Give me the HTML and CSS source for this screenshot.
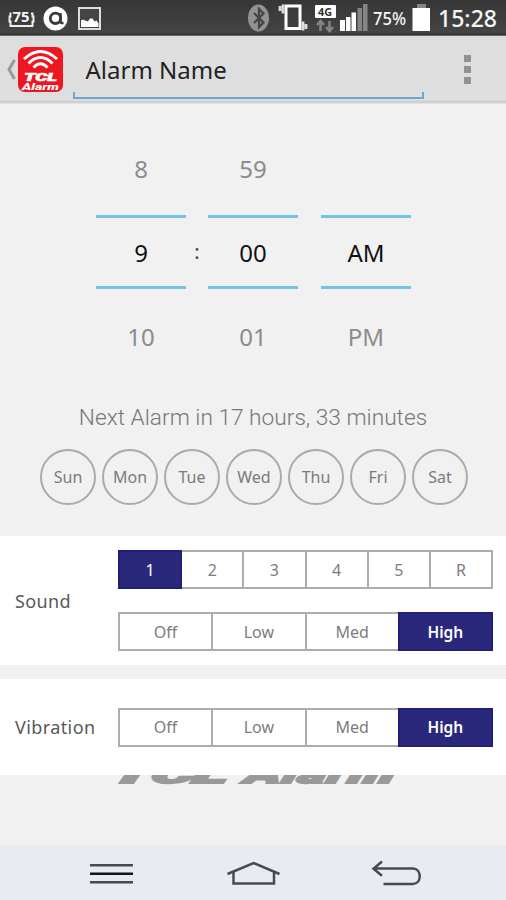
FILE: index.html
```html
<!DOCTYPE html>
<html lang="en">
<head>
<meta charset="utf-8">
<title>Alarm</title>
<link rel="stylesheet" href="styles.css">
</head>
<body>
<div class="phone">
  <header class="status">
    <svg class="status-icons" width="506" height="36" viewBox="0 0 506 36">
      <path d="M12 13.500h-1.500v3h-1v5h1v4.500h22v-4.500h1v-5h-1v-3h-1.500" stroke="#eee" stroke-width="2" fill="none"/>
      <text x="12.500" y="22" font-size="15" font-weight="700" textLength="17" lengthAdjust="spacingAndGlyphs" class="glyph outlined">75</text>
      <circle cx="55.500" cy="18.500" r="12" fill="#fff"/>
      <circle cx="55.500" cy="18.300" r="5.200" fill="none" stroke="#393939" stroke-width="2.800"/>
      <path d="M60.500 13v8.500q0 2 3 1.500" stroke="#393939" stroke-width="2.500" fill="none"/>
      <rect x="79" y="8" width="21" height="21" fill="#444" stroke="#ddd" stroke-width="2"/>
      <path d="M81 27v-6.500l2-1 2 1 3 1 2-3 2.500 0 2 3 2-1 2 3v3.500z" fill="#fff"/>
      <ellipse cx="258.500" cy="18" rx="10.500" ry="13.500" fill="#929292"/>
      <path d="M254 13l9.500 9.500-4.500 4.500v-18l4.500 4.500-9.500 9.500" stroke="#444" stroke-width="2.200" fill="none"/>
      <rect x="286" y="6" width="14" height="22.500" fill="none" stroke="#fff" stroke-width="3"/>
      <path d="M280 6v5M283 4.500v9M303 21.500v9M306 24v5" stroke="#ddd" stroke-width="2.800"/>
      <rect x="315" y="5" width="21" height="13" rx="1" fill="#fff"/>
      <text x="318" y="15.500" font-size="11" font-weight="700" textLength="14" lengthAdjust="spacingAndGlyphs" class="glyph dark">4G</text>
      <path d="M320.500 31v-9M317 25l3.500-4 3.500 4M329.500 21v9M326 27l3.500 4 3.500-4" stroke="#858585" stroke-width="2.500" fill="none"/>
      <path d="M340 20h5v11h-5zM346 17h4.500v14h-4.500zM351.500 12.500h4.500v18.500h-4.500z" fill="#fff"/>
      <path d="M357.500 8h4.500v23h-4.500zM363 4h4.500v27h-4.500z" fill="#858585"/>
      <text x="373" y="25" font-size="18.500" font-weight="500" textLength="33" lengthAdjust="spacingAndGlyphs" class="glyph">75%</text>
      <path d="M417 4h9v4h-9z" fill="#858585"/>
      <rect x="412.500" y="8" width="17.500" height="23" fill="#fff"/>
      <text x="438" y="27" font-size="24" font-weight="500" textLength="59" lengthAdjust="spacingAndGlyphs" class="glyph">15:28</text>
    </svg>
  </header>
  <div class="actionbar">
    <svg class="app-icon" width="73" height="66" viewBox="0 36 73 66">
      <path d="M14.500 60l-5.500 9.500 5.500 9.500" fill="none" stroke="#999" stroke-width="3"/>
      <rect x="18" y="47" width="45" height="45" rx="7" fill="#ee1620"/>
      <g fill="none" stroke="#fff" stroke-width="3">
        <path d="M24 59Q40.500 44 57 59"/>
        <path d="M28.500 63.500Q40.500 51.500 52.500 63.500"/>
        <path d="M33.500 67.500Q40.500 60 47.500 67.500"/>
      </g>
      <text x="24" y="80.500" font-size="11" textLength="33" lengthAdjust="spacingAndGlyphs" class="logo bold">TCL</text>
      <text x="22" y="89.500" font-size="8.500" textLength="37" lengthAdjust="spacingAndGlyphs" class="logo">Alarm</text>
    </svg>
    <div class="name-field"><span>Alarm Name</span></div>
    <div class="overflow"><i></i><i></i><i></i></div>
  </div>
  <main class="content">
    <div class="picker">
      <div class="wheel"><span>8</span><b>9</b><span>10</span></div>
      <div class="colon">:</div>
      <div class="wheel"><span>59</span><b>00</b><span>01</span></div>
      <div class="wheel last"><span></span><b>AM</b><span>PM</span></div>
    </div>
    <p class="next">Next Alarm in 17 hours, 33 minutes</p>
    <div class="days"><span>Sun</span><span>Mon</span><span>Tue</span><span>Wed</span><span>Thu</span><span>Fri</span><span>Sat</span></div>
    <section class="panel sound">
      <h2>Sound</h2>
      <div class="rows">
        <div class="segments"><span class="on">1</span><span>2</span><span>3</span><span>4</span><span>5</span><span>R</span></div>
        <div class="segments"><span>Off</span><span>Low</span><span>Med</span><span class="on">High</span></div>
      </div>
    </section>
    <section class="panel vibration">
      <h2>Vibration</h2>
      <div class="rows">
        <div class="segments"><span>Off</span><span>Low</span><span>Med</span><span class="on">High</span></div>
      </div>
    </section>
    <svg class="watermark" width="506" height="12" viewBox="0 775 506 12">
      <g transform="translate(0 782.500) skewX(-15)" font-size="26">
        <text transform="scale(2.6 1)" x="42 57.500 73.500" y="0" class="logo grey">TCL</text>
        <text transform="scale(2.1 1)" x="116" y="0" textLength="71" class="logo grey">Alarm</text>
      </g>
    </svg>
  </main>
  <nav class="navbar">
    <svg width="506" height="55" viewBox="0 845 506 55" fill="none" stroke="#454b55" stroke-width="2.500">
      <path d="M90 865.300h43M90 882.300h43"/>
      <path d="M90 873.700h43" stroke="#15151c"/>
      <path d="M227.500 874l26-11 26 11M233.500 872v11.500h40.500v-11.500"/>
      <path d="M382 861.500l-8.500 7.200 8.500 7M374 868.500h39c9 0 9 15.500 0 15.500h-29.500"/>
    </svg>
  </nav>
</div>
</body>
</html>
```
FILE: styles.css
```css
* { box-sizing: border-box; }
body { margin: 0; font-family: "Noto Sans", "Open Sans", sans-serif; }
svg { display: block; }
.phone { width: 506px; height: 900px; display: flex; flex-direction: column; background: #f1f1f1; overflow: hidden; }
.status { height: 36px; background: linear-gradient(#363636, #444 33px, #292929 35px, #aaa 36px); }
.glyph { fill: #f5f5f5; font-family: "Noto Sans", sans-serif; }
.outlined { stroke: #3a3a3a; stroke-width: 3px; paint-order: stroke; }
.dark { fill: #333; }
.logo { fill: #fff; font-family: Roboto, sans-serif; font-weight: 900; font-style: italic; }
.bold { stroke: #fff; stroke-width: .6px; }
.grey { fill: #999; stroke: #999; stroke-width: 1.800px; }
.actionbar { height: 68px; display: flex; background: linear-gradient(#dedede 64px, #c9c9c9 66px, #e9e9e9 68px); }
.name-field { width: 351px; height: 63px; padding: 17px 0 0 12.500px; font-size: 24px; line-height: 34px; color: #222; background: linear-gradient(#6aa8cf, #6aa8cf) 0 100% / 100% 2.500px no-repeat, linear-gradient(#6aa8cf, #6aa8cf) 0 100% / 2px 7px no-repeat, linear-gradient(#6aa8cf, #6aa8cf) 100% 100% / 2px 7px no-repeat; }
.overflow { display: flex; flex-direction: column; gap: 4px; padding: 19px 0 0 40px; }
.overflow i { width: 7px; height: 7px; background: #929292; }
.content { height: 741px; display: flex; flex-direction: column; }
.picker { display: flex; height: 276px; padding: 23px 0 0 96px; font-size: 24px; }
.wheel { width: 90px; text-align: center; }
.wheel span, .wheel b { display: flex; align-items: center; justify-content: center; font-weight: 400; }
.wheel span { height: 88px; color: #8c8c8c; }
.wheel span:first-child { padding-bottom: 6px; }
.wheel span:last-child { padding-top: 6px; }
.wheel b { height: 74px; color: #111; border-top: 3px solid #75c4df; border-bottom: 3px solid #75c4df; }
.wheel.last { margin-left: 23px; }
.colon { width: 22px; padding-top: 109px; font-size: 20px; line-height: 32px; text-align: center; color: #444; }
.next { margin: 24px 0 0; text-align: center; font: 300 22.700px/28px Roboto, sans-serif; color: #777; }
.days { display: flex; gap: 6px; padding: 17px 0 0 40px; }
.days span { width: 56px; height: 56px; border: 2px solid #aaa; border-radius: 50%; display: flex; align-items: center; justify-content: center; font-size: 16px; color: #7b7b7b; }
.panel { display: flex; align-items: center; background: #fff; }
.sound { height: 129px; margin-top: 31px; }
.vibration { height: 96px; margin-top: 14px; }
h2 { width: 118px; margin: 0; padding-left: 15px; font-size: 18px; font-weight: 400; letter-spacing: .4px; color: #595959; }
.rows { display: flex; flex-direction: column; gap: 23px; }
.segments { display: grid; grid-auto-flow: column; grid-auto-columns: 1fr; gap: 2px; width: 375px; height: 39px; padding: 2px; background: #adadad; }
.segments span { display: flex; align-items: center; justify-content: center; font-size: 16px; color: #7c7c7c; background: #fff; }
.segments .on { background: #29287b; box-shadow: 0 0 0 2px #211f78; color: #fff; }
.segments .on:last-child { font-weight: 600; font-size: 15.500px; }
.navbar { height: 55px; background: #e8ecf0; }
```
